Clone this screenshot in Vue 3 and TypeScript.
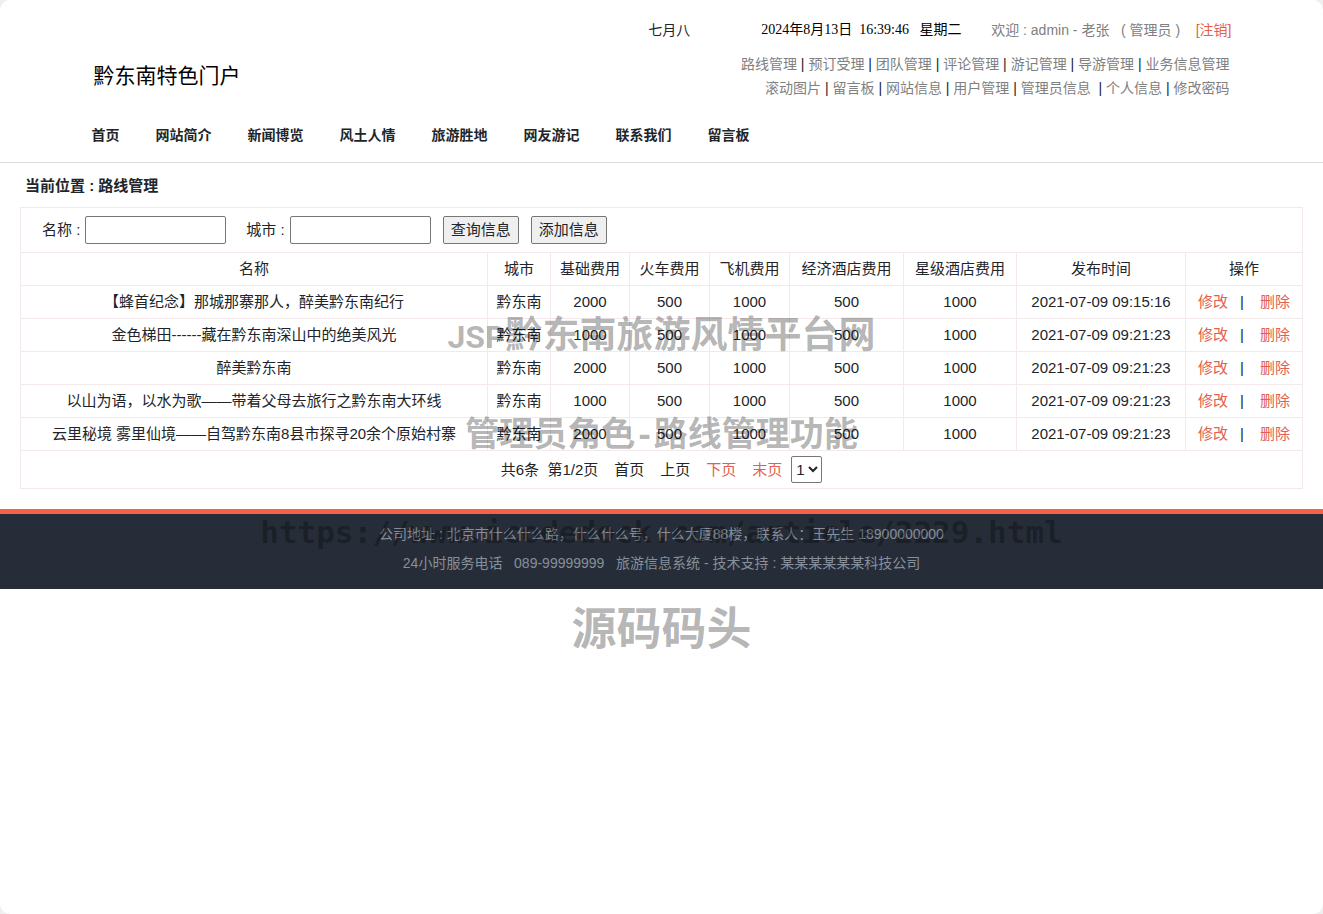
<script setup lang="ts">
import { ref } from 'vue'

interface RouteRow {
  name: string
  city: string
  base: number
  train: number
  plane: number
  economy: number
  star: number
  published: string
}

const adminLinks: string[][] = [
  ['路线管理', '预订受理', '团队管理', '评论管理', '游记管理', '导游管理', '业务信息管理'],
  ['滚动图片', '留言板', '网站信息', '用户管理', '管理员信息\u00a0', '个人信息', '修改密码'],
]

const navItems: string[] = ['首页', '网站简介', '新闻博览', '风土人情', '旅游胜地', '网友游记', '联系我们', '留言板']

const columns: string[] = ['名称', '城市', '基础费用', '火车费用', '飞机费用', '经济酒店费用', '星级酒店费用', '发布时间', '操作']

const rows: RouteRow[] = [
  { name: '【蜂首纪念】那城那寨那人，醉美黔东南纪行', city: '黔东南', base: 2000, train: 500, plane: 1000, economy: 500, star: 1000, published: '2021-07-09 09:15:16' },
  { name: '金色梯田------藏在黔东南深山中的绝美风光', city: '黔东南', base: 1000, train: 500, plane: 1000, economy: 500, star: 1000, published: '2021-07-09 09:21:23' },
  { name: '醉美黔东南', city: '黔东南', base: 2000, train: 500, plane: 1000, economy: 500, star: 1000, published: '2021-07-09 09:21:23' },
  { name: '以山为语，以水为歌——带着父母去旅行之黔东南大环线', city: '黔东南', base: 1000, train: 500, plane: 1000, economy: 500, star: 1000, published: '2021-07-09 09:21:23' },
  { name: '云里秘境 雾里仙境——自驾黔东南8县市探寻20余个原始村寨', city: '黔东南', base: 2000, train: 500, plane: 1000, economy: 500, star: 1000, published: '2021-07-09 09:21:23' },
]

const nameQuery = ref('')
const cityQuery = ref('')
const page = ref('1')
</script>

<template>
  <div class="page">
    <header class="header">
      <div class="container">
        <div class="top">
          <h1 class="title">黔东南特色门户</h1>
          <div class="account">
            <div class="status">
              <span class="lunar">七月八</span>
              <time class="clock">2024年8月13日&nbsp; 16:39:46&nbsp;&nbsp; 星期二</time>
              <span class="welcome">欢迎 : admin - 老张&nbsp;&nbsp; ( 管理员 )&nbsp;&nbsp;&nbsp; <a href="#" class="accent">[注销]</a></span>
            </div>
            <div v-for="(group, g) in adminLinks" :key="g" class="links">
              <template v-for="(link, i) in group" :key="link">
                <span v-if="i > 0">&nbsp;|&nbsp;</span><a href="#">{{ link }}</a>
              </template>
            </div>
          </div>
        </div>
        <nav class="nav">
          <a v-for="item in navItems" :key="item" href="#">{{ item }}</a>
        </nav>
      </div>
    </header>

    <main class="main">
      <h2 class="crumb">当前位置 : 路线管理</h2>
      <form class="search" @submit.prevent>
        <label for="name">名称 :</label>
        <input id="name" v-model="nameQuery" type="text">
        <label for="city" class="second">城市 :</label>
        <input id="city" v-model="cityQuery" type="text">
        <button type="submit">查询信息</button>
        <button type="button">添加信息</button>
      </form>
      <table class="grid">
        <colgroup>
          <col>
          <col class="w-city">
          <col class="w-base">
          <col class="w-fee">
          <col class="w-fee">
          <col class="w-economy">
          <col class="w-star">
          <col class="w-date">
          <col class="w-action">
        </colgroup>
        <thead>
          <tr>
            <th v-for="column in columns" :key="column" scope="col">{{ column }}</th>
          </tr>
        </thead>
        <tbody>
          <tr v-for="row in rows" :key="row.name">
            <td>{{ row.name }}</td>
            <td>{{ row.city }}</td>
            <td>{{ row.base }}</td>
            <td>{{ row.train }}</td>
            <td>{{ row.plane }}</td>
            <td>{{ row.economy }}</td>
            <td>{{ row.star }}</td>
            <td>{{ row.published }}</td>
            <td><a href="#" class="accent">修改</a><span class="bar">|</span><a href="#" class="accent">删除</a></td>
          </tr>
        </tbody>
      </table>
      <div class="pager">
        <span>共6条&nbsp; 第1/2页</span>
        <span>首页</span>
        <span>上页</span>
        <a href="#" class="accent">下页</a>
        <a href="#" class="accent">末页</a>
        <select v-model="page" aria-label="页码">
          <option>1</option>
          <option>2</option>
        </select>
      </div>
    </main>

    <footer class="footer">
      <p>公司地址 : 北京市什么什么路，什么什么号，什么大厦88楼，联系人：王先生 18900000000</p>
      <p>24小时服务电话&nbsp;&nbsp; 089-99999999&nbsp;&nbsp; 旅游信息系统 - 技术支持 : 某某某某某某科技公司</p>
    </footer>

    <div class="watermark" aria-hidden="true">
      <p class="mark-site"><span class="latin">JSP</span>黔东南旅游风情平台网</p>
      <p class="mark-role">管理员角色<span class="mono">-</span>路线管理功能</p>
      <p class="mono">https://www.icodedock.com/article/2229.html</p>
      <p class="mark-brand">源码码头</p>
    </div>
  </div>
</template>

<style>
body {
  margin: 0;
  background: #efefef;
}
</style>

<style scoped>
.page {
  position: relative;
  min-height: 100vh;
  border-radius: 10px;
  background: #fff;
  color: #212529;
  font-family: "Liberation Sans", "Noto Sans CJK SC", sans-serif;
  font-size: 15px;
  line-height: 24px;
}

a {
  color: inherit;
  text-decoration: none;
}

h1,
h2,
p {
  margin: 0;
}

a.accent {
  color: #e2604f;
}

.header {
  padding: 18px 0 15px;
  border-bottom: 1px solid #dcdcdc;
}

.container {
  max-width: 1140px;
  margin: 0 auto;
}

.top {
  display: flex;
  justify-content: space-between;
  align-items: flex-end;
}

.title {
  margin: 0 0 12px 2px;
  color: #000;
  font-size: 21px;
  font-weight: 400;
}

.account {
  font-size: 14px;
}

.status {
  display: flex;
  justify-content: flex-end;
  height: 24px;
  margin-bottom: 10px;
}

.lunar {
  margin-right: 71px;
}

.clock {
  min-width: 203px;
  margin-right: 27px;
  color: #000;
  font-family: "Liberation Serif", "Noto Sans CJK SC", serif;
  white-space: nowrap;
}

.welcome {
  color: #808080;
  white-space: nowrap;
}

.links {
  display: flex;
  justify-content: flex-end;
  padding-right: 2px;
}

.links a {
  color: #808080;
}

.nav {
  display: flex;
  gap: 36px;
  margin-top: 23px;
  font-size: 14px;
  font-weight: 700;
}

.main {
  padding: 0 20px 20px;
}

.crumb {
  padding: 11px 5px 9px;
  font-size: 15px;
  font-weight: 700;
}

.search {
  display: flex;
  align-items: center;
  box-sizing: border-box;
  height: 45px;
  padding-left: 21px;
  border: 1px solid #f3e9eb;
  border-bottom: 0;
}

.search label {
  margin-right: 5px;
}

.search label.second {
  margin-left: 20px;
}

.search input {
  box-sizing: border-box;
  width: 141px;
  height: 28px;
  padding: 1px 4px;
  border: 1px solid #767676;
  border-radius: 2px;
  background: #fff;
  font: inherit;
}

.search button {
  box-sizing: border-box;
  width: 76px;
  height: 28px;
  margin-left: 12px;
  padding: 0;
  border: 1px solid #767676;
  border-radius: 2px;
  background: #efefef;
  color: inherit;
  font: inherit;
}

.grid {
  width: 100%;
  table-layout: fixed;
  border-collapse: collapse;
  text-align: center;
}

.grid th,
.grid td {
  padding: 4px 0;
  border: 1px solid #f3e9eb;
  font-weight: 400;
  white-space: nowrap;
}

.w-city {
  width: 63px;
}

.w-base {
  width: 79px;
}

.w-fee {
  width: 80px;
}

.w-economy {
  width: 114px;
}

.w-star {
  width: 113px;
}

.w-date {
  width: 169px;
}

.w-action {
  width: 117px;
}

.bar {
  margin: 0 16px 0 12px;
}

.pager {
  display: flex;
  justify-content: center;
  align-items: center;
  gap: 16px;
  box-sizing: border-box;
  height: 38px;
  border: 1px solid #f3e9eb;
  border-top: 0;
}

.pager select {
  width: 31px;
  height: 27px;
  margin-left: -7px;
  padding: 0;
  border: 1px solid #767676;
  border-radius: 2px;
  background: #fff;
  color: inherit;
  font: inherit;
}

.footer {
  padding: 6px 0 11px;
  border-top: 5px solid #f9604c;
  background: #262d38;
  color: #87909a;
  font-size: 14px;
  line-height: 29px;
  text-align: center;
}

.watermark {
  position: absolute;
  top: 282px;
  right: 0;
  left: 0;
  color: rgba(0, 0, 0, 0.3);
  font-family: "Noto Sans CJK SC", sans-serif;
  font-weight: 700;
  line-height: 100px;
  text-align: center;
  white-space: nowrap;
  pointer-events: none;
}

.watermark p {
  height: 100px;
}

.watermark .latin {
  font-family: Roboto, sans-serif;
  font-size: 32px;
  line-height: 1;
}

.watermark .mono {
  font-family: "DejaVu Sans Mono", monospace;
  font-size: 31px;
}

.watermark span.mono {
  line-height: 1;
}

.mark-site {
  font-size: 37px;
}

.mark-role {
  font-size: 34px;
}

.mark-brand {
  font-size: 45px;
  line-height: 88px;
}
</style>
